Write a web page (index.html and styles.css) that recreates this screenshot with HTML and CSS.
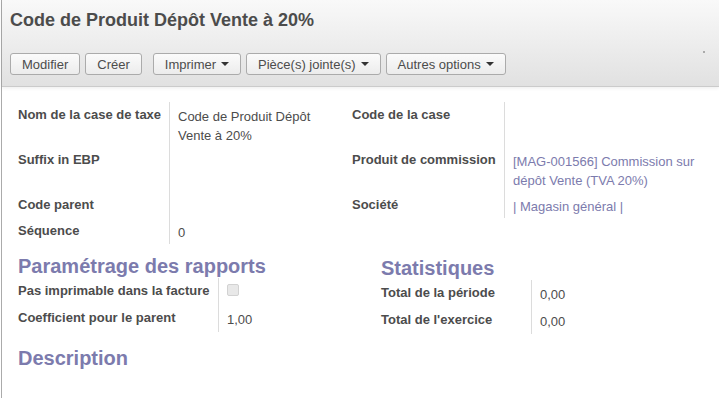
FILE: index.html
```html
<!DOCTYPE html>
<html lang="fr">
<head>
    <meta charset="UTF-8">
    <title>Code de Produit Dépôt Vente à 20%</title>
    <link rel="stylesheet" href="styles.css">
</head>
<body>
    <div class="view">
        <header class="control-panel">
            <h1 class="title">Code de Produit Dépôt Vente à 20%</h1>
            <div class="buttons">
                <button class="btn">Modifier</button>
                <button class="btn">Créer</button>
                <button class="btn btn-spaced">Imprimer <span class="caret"></span></button>
                <button class="btn">Pièce(s) jointe(s) <span class="caret"></span></button>
                <button class="btn">Autres options <span class="caret"></span></button>
                <span class="pager-dot"></span>
            </div>
        </header>

        <div class="sheet">
            <div class="form-grid">
                <div class="lbl">Nom de la case de taxe</div>
                <div class="val val-narrow">Code de Produit Dépôt Vente à 20%</div>
                <div class="lbl">Code de la case</div>
                <div class="val"></div>

                <div class="lbl">Suffix in EBP</div>
                <div class="val"></div>
                <div class="lbl">Produit de commission</div>
                <div class="val"><a class="link">[MAG-001566] Commission sur dépôt Vente (TVA 20%)</a></div>

                <div class="lbl">Code parent</div>
                <div class="val"></div>
                <div class="lbl">Société</div>
                <div class="val"><a class="link">| Magasin général |</a></div>

                <div class="lbl">Séquence</div>
                <div class="val">0</div>
                <div class="lbl"></div>
                <div class="val val-empty"></div>
            </div>

            <div class="groups">
                <section class="group">
                    <h2 class="section-title">Paramétrage des rapports</h2>
                    <div class="sub-grid sub-left">
                        <div class="lbl">Pas imprimable dans la facture</div>
                        <div class="val"><span class="checkbox"></span></div>
                        <div class="lbl">Coefficient pour le parent</div>
                        <div class="val">1,00</div>
                    </div>
                </section>
                <section class="group group-right">
                    <h2 class="section-title">Statistiques</h2>
                    <div class="sub-grid sub-right">
                        <div class="lbl">Total de la période</div>
                        <div class="val">0,00</div>
                        <div class="lbl">Total de l'exercice</div>
                        <div class="val">0,00</div>
                    </div>
                </section>
            </div>

            <h2 class="section-title desc">Description</h2>
        </div>
    </div>
</body>
</html>
```

FILE: styles.css
```css
* {
    margin: 0;
    padding: 0;
    box-sizing: border-box;
}

body {
    font-family: 'Liberation Sans', Arial, sans-serif;
    font-size: 13px;
    color: #4c4c4c;
    background: #fff;
}

.view {
    margin-left: 1px;
    border-left: 1px solid #ababab;
    min-height: 100vh;
}

/* barre du haut */
.control-panel {
    background: linear-gradient(#f9f9f9, #e1e1e1);
    border-bottom: 1px solid #cbcbcb;
    box-shadow: 0 1px 4px rgba(0,0,0,0.08);
    padding: 10px 8px 11px;
}

.title {
    font-size: 18px;
    line-height: 20px;
    font-weight: bold;
    color: #4c4c4c;
}

.buttons {
    display: flex;
    align-items: flex-start;
    gap: 5px;
    margin-top: 23px;
}

.btn {
    height: 22px;
    padding: 0 11px;
    font-family: inherit;
    font-size: 13px;
    color: #4c4c4c;
    background: linear-gradient(#fbfbfb, #ececec);
    border: 1px solid #ababab;
    border-radius: 3px;
    display: flex;
    align-items: center;
    gap: 5px;
}

.btn-spaced {
    margin-left: 6px;
}

.caret {
    width: 0;
    height: 0;
    border-left: 4px solid transparent;
    border-right: 4px solid transparent;
    border-top: 4px solid #333;
}

.pager-dot {
    width: 2px;
    height: 2px;
    background: #aaa;
    margin-left: auto;
    margin-top: -2px;
    margin-right: 6px;
}

/* fiche */
.sheet {
    padding: 15px 16px 20px;
}

.form-grid {
    display: grid;
    grid-template-columns: 151px 183px 152px 1fr;
}

.lbl {
    font-weight: bold;
    line-height: 19px;
    white-space: nowrap;
    padding: 3px 0 2px;
}

.val {
    line-height: 19px;
    padding: 5px 4px 2px 8px;
    border-left: 1px solid #dcdcdc;
}

.val-narrow {
    padding-right: 16px;
}

.val-empty {
    border-left-color: transparent;
}

.link {
    color: #7c7bad;
    text-decoration: none;
}

.groups {
    display: grid;
    grid-template-columns: 363px 1fr;
    margin-top: 10px;
}

.group-right {
    padding-top: 2px;
}

.section-title {
    font-size: 20px;
    line-height: 24px;
    font-weight: bold;
    color: #7c7bad;
}

.sub-grid {
    display: grid;
}

.sub-grid .lbl {
    padding-bottom: 5px;
}

.sub-left {
    grid-template-columns: 200px 1fr;
}

.sub-right {
    grid-template-columns: 150px 1fr;
}

.checkbox {
    display: block;
    width: 12px;
    height: 12px;
    margin-top: 1px;
    background: #e8e8e8;
    border: 1px solid #d2d2d2;
    border-radius: 2px;
}

.desc {
    margin-top: 12px;
}
```
